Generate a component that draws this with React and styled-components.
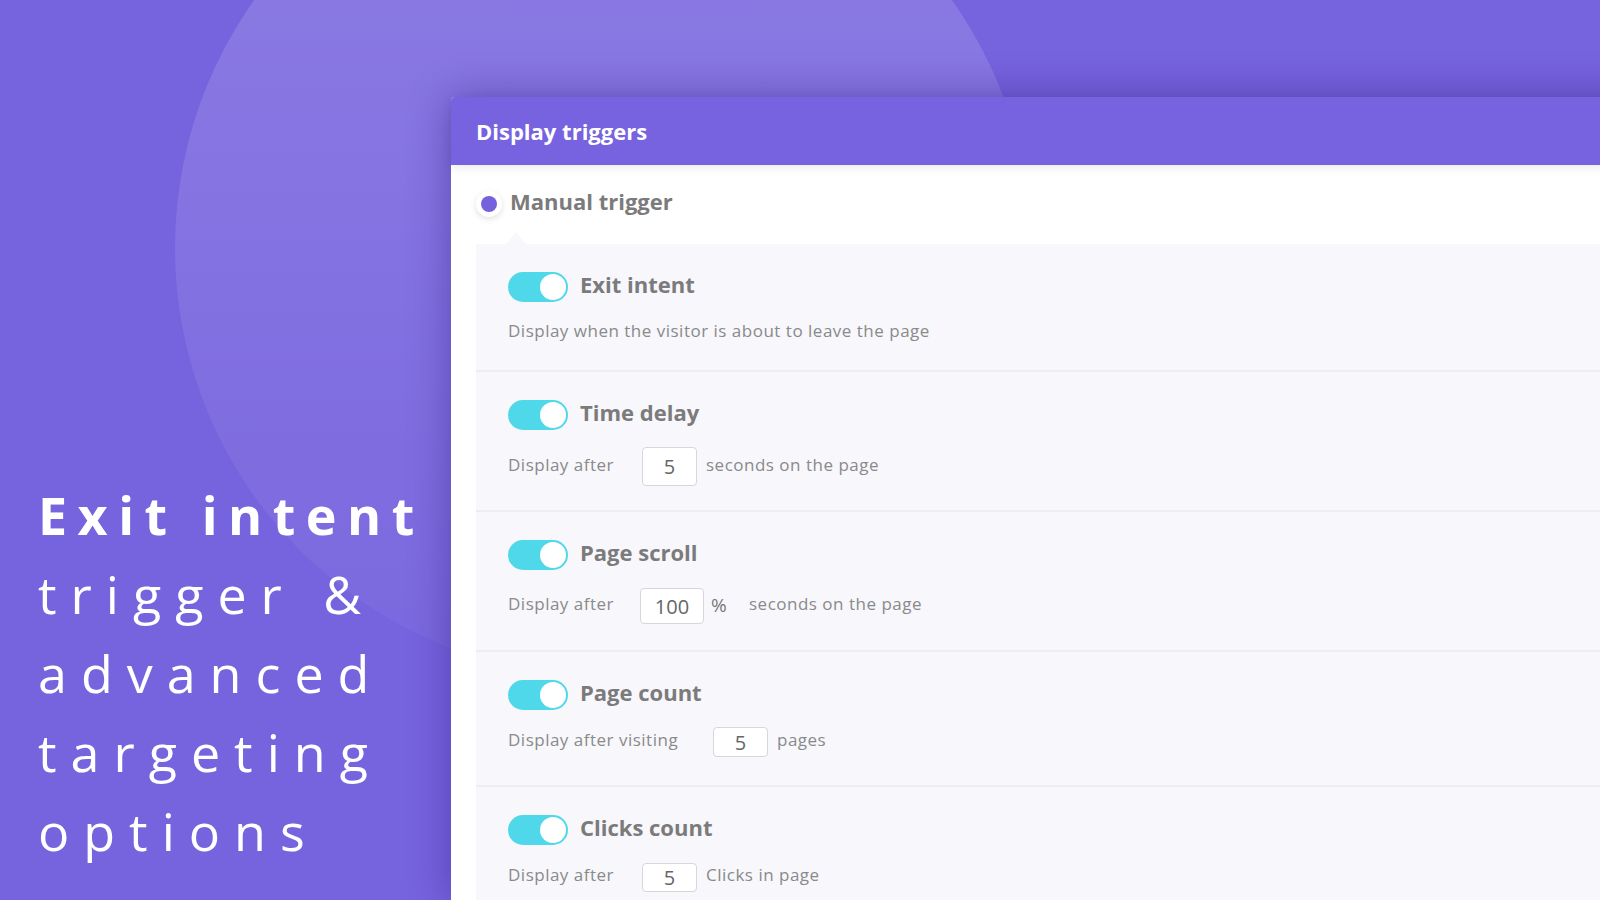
import React from 'react';
import styled, { createGlobalStyle } from 'styled-components';

const GlobalStyle = createGlobalStyle`
    html, body {
        margin: 0;
        padding: 0;
    }
    body {
        font-family: 'Open Sans', 'Liberation Sans', sans-serif;
    }
`;

const triggers = [
    { title: 'Exit intent', desc: 'Display when the visitor is about to leave the page', rowHeight: 27, pb: 24 },
    { title: 'Time delay', label: 'Display after', labelWidth: 134, value: '5', inputW: 55, inputH: 39, after: 'seconds on the page', rowHeight: 39, pb: 24 },
    { title: 'Page scroll', label: 'Display after', labelWidth: 132, value: '100', inputW: 64, inputH: 36, unit: '%', after: 'seconds on the page', rowHeight: 38, pb: 25 },
    { title: 'Page count', label: 'Display after visiting', labelWidth: 205, value: '5', inputW: 55, inputH: 30, after: 'pages', rowHeight: 30, pb: 28 },
    { title: 'Clicks count', label: 'Display after', labelWidth: 134, value: '5', inputW: 55, inputH: 29, after: 'Clicks in page', rowHeight: 30, pb: 28 },
];

function App() {
    return (
        <Page>
            <GlobalStyle />
            <Blob />
            <Intro>
                <Headline>
                    <strong>Exit intent</strong>
                    <span>trigger &amp;</span>
                    <span>advanced</span>
                    <span>targeting</span>
                    <span>options</span>
                </Headline>
            </Intro>
            <Card>
                <CardHeader>Display triggers</CardHeader>
                <CardBody>
                    <ManualRow>
                        <Radio />
                        <ManualLabel>Manual trigger</ManualLabel>
                    </ManualRow>
                    <Panel>
                        {triggers.map((t) => (
                            <Section key={t.title} $pb={t.pb}>
                                <SectionHead>
                                    <Toggle />
                                    <SectionTitle>{t.title}</SectionTitle>
                                </SectionHead>
                                <Row $h={t.rowHeight}>
                                    {t.desc ? (
                                        <Muted>{t.desc}</Muted>
                                    ) : (
                                        <>
                                            <Muted $w={t.labelWidth}>{t.label}</Muted>
                                            <NumberBox $w={t.inputW} $h={t.inputH}>{t.value}</NumberBox>
                                            {t.unit && <Unit>{t.unit}</Unit>}
                                            <After>{t.after}</After>
                                        </>
                                    )}
                                </Row>
                            </Section>
                        ))}
                    </Panel>
                </CardBody>
            </Card>
        </Page>
    );
}

const Page = styled.div`
    position: relative;
    display: flex;
    width: 100vw;
    height: 100vh;
    overflow: hidden;
    background-color: #7663de;
`;

const Blob = styled.div`
    position: absolute;
    left: 175px;
    top: -180px;
    width: 856px;
    height: 856px;
    border-radius: 50%;
    background: linear-gradient(180deg, rgba(255, 255, 255, 0.17) 0%, rgba(255, 255, 255, 0.09) 55%, rgba(255, 255, 255, 0.03) 100%);
`;

const Intro = styled.div`
    position: relative;
    z-index: 1;
    width: 451px;
    flex-shrink: 0;
    display: flex;
    flex-direction: column;
    justify-content: flex-end;
    padding: 0 0 30px 38px;
    box-sizing: border-box;
`;

const Headline = styled.h1`
    margin: 0;
    display: flex;
    flex-direction: column;
    font-family: 'Open Sans', sans-serif;
    font-size: 52px;
    line-height: 79px;
    font-weight: 400;
    letter-spacing: 14px;
    color: #fff;

    strong {
        font-weight: 700;
        letter-spacing: 10.5px;
    }
`;

const Card = styled.section`
    position: relative;
    z-index: 2;
    flex-shrink: 0;
    width: 1200px;
    margin-top: 97px;
    background: #fff;
    border-radius: 4px 0 0 0;
    box-shadow: 0 0 40px rgba(45, 25, 120, 0.45);
`;

const CardHeader = styled.div`
    position: relative;
    z-index: 1;
    height: 68px;
    display: flex;
    align-items: center;
    padding-left: 25px;
    background: #7763df;
    border-radius: 4px 0 0 0;
    color: #fff;
    font-family: 'Open Sans', sans-serif;
    font-size: 22px;
    font-weight: 700;
    box-shadow: 0 3px 10px rgba(0, 0, 0, 0.08);
`;

const CardBody = styled.div`
    padding-left: 25px;
`;

const ManualRow = styled.div`
    height: 79px;
    display: flex;
    align-items: center;
    gap: 8px;
    padding-bottom: 2px;
    box-sizing: border-box;
`;

const Radio = styled.span`
    width: 26px;
    height: 26px;
    border-radius: 50%;
    background: #fff;
    box-shadow: 0 2px 6px rgba(0, 0, 0, 0.12);
    display: flex;
    align-items: center;
    justify-content: center;

    &::after {
        content: '';
        width: 16px;
        height: 16px;
        border-radius: 50%;
        background: #7561de;
    }
`;

const ManualLabel = styled.span`
    margin-top: -5px;
    font-size: 22px;
    font-weight: 700;
    color: #7b7b7b;
`;

const Panel = styled.div`
    position: relative;
    background: #f7f7fc;

    &::before {
        content: '';
        position: absolute;
        left: 30px;
        top: -12px;
        border-left: 10px solid transparent;
        border-right: 10px solid transparent;
        border-bottom: 12px solid #f7f7fc;
    }
`;

const Section = styled.div`
    padding: 28px 32px ${(p) => p.$pb}px;
    border-bottom: 2px solid #ededf4;
`;

const SectionHead = styled.div`
    display: flex;
    align-items: center;
    gap: 12px;
    height: 30px;
`;

const Toggle = styled.span`
    position: relative;
    flex-shrink: 0;
    width: 60px;
    height: 30px;
    border-radius: 15px;
    background: #4fd8ea;

    &::after {
        content: '';
        position: absolute;
        right: 2px;
        top: 2px;
        width: 26px;
        height: 26px;
        border-radius: 50%;
        background: #fff;
    }
`;

const SectionTitle = styled.span`
    margin-top: -6px;
    font-size: 22px;
    font-weight: 700;
    color: #7b7b7b;
`;

const Row = styled.div`
    display: flex;
    align-items: center;
    height: ${(p) => p.$h}px;
    margin-top: 17px;
    font-size: 17px;
    letter-spacing: 0.5px;
    color: #8a8a8a;
`;

const Muted = styled.span`
    width: ${(p) => (p.$w ? `${p.$w}px` : 'auto')};
    flex-shrink: 0;
    margin-bottom: 5px;
`;

const NumberBox = styled.span`
    width: ${(p) => p.$w}px;
    height: ${(p) => p.$h}px;
    box-sizing: border-box;
    flex-shrink: 0;
    display: flex;
    align-items: center;
    justify-content: center;
    background: #fff;
    border: 1px solid #d6d6dc;
    border-radius: 4px;
    font-size: 20px;
    letter-spacing: 0;
    color: #666;
`;

const Unit = styled.span`
    margin: 0 0 3px 7px;
    width: 29px;
    font-size: 19px;
    color: #777;
`;

const After = styled.span`
    margin: 0 0 5px 9px;
`;

export default App;
